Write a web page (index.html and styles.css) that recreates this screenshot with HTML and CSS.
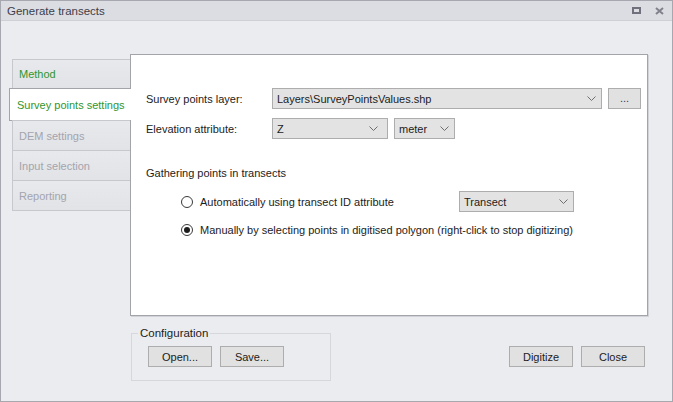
FILE: index.html
```html
<!DOCTYPE html>
<html>
<head>
<meta charset="utf-8">
<link rel="stylesheet" href="styles.css">
</head>
<body>
<div class="window">
  <div class="titlebar">
    <span class="title">Generate transects</span>
    <span class="tb-icons">
      <span class="ico-max"></span>
      <svg class="ico-close" width="9" height="8" viewBox="0 0 9 8"><path d="M1 1 L8 7 M8 1 L1 7" stroke="#80818b" stroke-width="2" fill="none"/></svg>
    </span>
  </div>
  <div class="main">
    <div class="tabs">
      <div class="tab green first">Method</div>
      <div class="tab active green">Survey points settings</div>
      <div class="tab disabled">DEM settings</div>
      <div class="tab disabled">Input selection</div>
      <div class="tab disabled">Reporting</div>
    </div>
    <div class="panel">
      <div class="row">
        <span class="label">Survey points layer:</span>
        <div class="combo w-layer"><span>Layers\SurveyPointsValues.shp</span><svg width="9" height="5" viewBox="0 0 9 5"><polyline points="0.5,0.5 4.5,4.5 8.5,0.5" fill="none" stroke="#6f6f6f"/></svg></div>
        <div class="btn btn-dots">...</div>
      </div>
      <div class="row row2">
        <span class="label">Elevation attribute:</span>
        <div class="combo w-z"><span>Z</span><svg width="9" height="5" viewBox="0 0 9 5"><polyline points="0.5,0.5 4.5,4.5 8.5,0.5" fill="none" stroke="#6f6f6f"/></svg></div>
        <div class="combo w-meter"><span>meter</span><svg width="9" height="5" viewBox="0 0 9 5"><polyline points="0.5,0.5 4.5,4.5 8.5,0.5" fill="none" stroke="#6f6f6f"/></svg></div>
      </div>
      <div class="section">Gathering points in transects</div>
      <div class="radio-row r1">
        <div class="radio-item"><span class="radio"></span><span>Automatically using transect ID attribute</span></div>
        <div class="combo w-transect"><span>Transect</span><svg width="9" height="5" viewBox="0 0 9 5"><polyline points="0.5,0.5 4.5,4.5 8.5,0.5" fill="none" stroke="#6f6f6f"/></svg></div>
      </div>
      <div class="radio-row r2">
        <div class="radio-item"><span class="radio checked"></span><span>Manually by selecting points in digitised polygon (right-click to stop digitizing)</span></div>
      </div>
    </div>
  </div>
  <div class="footer">
    <fieldset class="config">
      <legend>Configuration</legend>
      <div class="btn-row">
        <div class="btn">Open...</div>
        <div class="btn">Save...</div>
      </div>
    </fieldset>
    <div class="btn-row actions">
      <div class="btn">Digitize</div>
      <div class="btn">Close</div>
    </div>
  </div>
</div>
</body>
</html>
```

FILE: styles.css
```css
html, body {
  margin: 0;
  padding: 0;
}
body {
  font-family: "Liberation Sans", Arial, sans-serif;
  font-size: 11px;
  color: #1c1c1c;
  background: #ffffff;
}
.window {
  width: 673px;
  height: 402px;
  box-sizing: border-box;
  border: 1px solid #a6a7af;
  background: #ebecef;
  display: flex;
  flex-direction: column;
}
.titlebar {
  height: 20px;
  box-sizing: border-box;
  background: #dcdde2;
  border-bottom: 1px solid #cfd0d5;
  display: flex;
  align-items: center;
  justify-content: space-between;
  padding: 0 8px 0 6px;
}
.title {
  color: #3c3d4a;
  font-size: 11.5px;
}
.tb-icons {
  display: flex;
  align-items: center;
  gap: 14px;
}
.ico-max {
  width: 9px;
  height: 7px;
  box-sizing: border-box;
  border: 2px solid #6f707b;
}
.ico-close {
  display: block;
}
.main {
  display: flex;
  margin-top: 33px;
  padding-left: 8px;
}
.tabs {
  width: 121px;
  padding-top: 5px;
  display: flex;
  flex-direction: column;
  position: relative;
  z-index: 1;
}
.tab {
  height: 31px;
  box-sizing: border-box;
  margin-left: 3px;
  margin-top: -1px;
  border: 1px solid #c7c8cd;
  border-right: none;
  background: linear-gradient(#e8e9ec, #e2e3e7);
  display: flex;
  align-items: center;
  padding-left: 6px;
  white-space: nowrap;
}
.tab.first {
  margin-top: 0;
  height: 30px;
}
.tab.active {
  margin-left: 0;
  margin-right: -1px;
  height: 33px;
  background: #ffffff;
  border-color: #a3a4aa;
  padding-left: 7px;
}
.green { color: #2f962f; }
.disabled { color: #a3a4ae; }
.panel {
  width: 518px;
  height: 262px;
  box-sizing: border-box;
  background: #ffffff;
  border: 1px solid #a3a4aa;
  box-shadow: 1px 1px 0 #d2d3d8;
  padding: 33px 0 0 15px;
}
.row {
  display: flex;
  align-items: center;
  height: 21px;
}
.row2 {
  margin-top: 9px;
}
.label {
  width: 126px;
  flex: none;
}
.combo {
  height: 21px;
  box-sizing: border-box;
  background: #e3e3e3;
  border: 1px solid #adadad;
  display: flex;
  align-items: center;
  justify-content: space-between;
  padding: 0 5px 0 4px;
  flex: none;
}
.combo svg { display: block; }
.w-layer { width: 330px; }
.w-z { width: 116px; padding-right: 9px; }
.w-meter { width: 61px; margin-left: 6px; }
.w-transect { width: 115px; }
.btn {
  height: 21px;
  width: 64px;
  box-sizing: border-box;
  background: #e1e1e1;
  border: 1px solid #adadad;
  display: flex;
  align-items: center;
  justify-content: center;
  flex: none;
}
.btn-dots {
  width: 33px;
  margin-left: 6px;
  color: #3a3a5a;
  padding-bottom: 2px;
}
.section {
  margin-top: 27px;
  line-height: 14px;
}
.radio-row {
  display: flex;
  align-items: center;
  height: 21px;
  padding-left: 35px;
}
.r1 { margin-top: 11px; }
.r2 { margin-top: 7px; }
.radio-item {
  display: flex;
  align-items: center;
  gap: 7px;
  width: 278px;
  flex: none;
  white-space: nowrap;
}
.radio {
  width: 12px;
  height: 12px;
  box-sizing: border-box;
  border: 1px solid #3a3a3a;
  border-radius: 50%;
  background: #ffffff;
  display: flex;
  align-items: center;
  justify-content: center;
  flex: none;
}
.radio.checked::after {
  content: "";
  width: 6px;
  height: 6px;
  border-radius: 50%;
  background: #1d1d1d;
}
.footer {
  display: flex;
  align-items: flex-start;
  margin-top: 10px;
  padding-left: 130px;
  padding-right: 27px;
}
.config {
  width: 200px;
  box-sizing: border-box;
  margin: 0;
  border: 1px solid #d6d7dc;
  padding: 6px 15px 13px 16px;
  min-width: 0;
}
.config legend {
  padding: 0 2px;
  margin-left: -10px;
  line-height: 14px;
  font-size: 11.5px;
}
.btn-row {
  display: flex;
  gap: 8px;
}
.actions {
  margin-left: auto;
  margin-top: 20px;
}
```
